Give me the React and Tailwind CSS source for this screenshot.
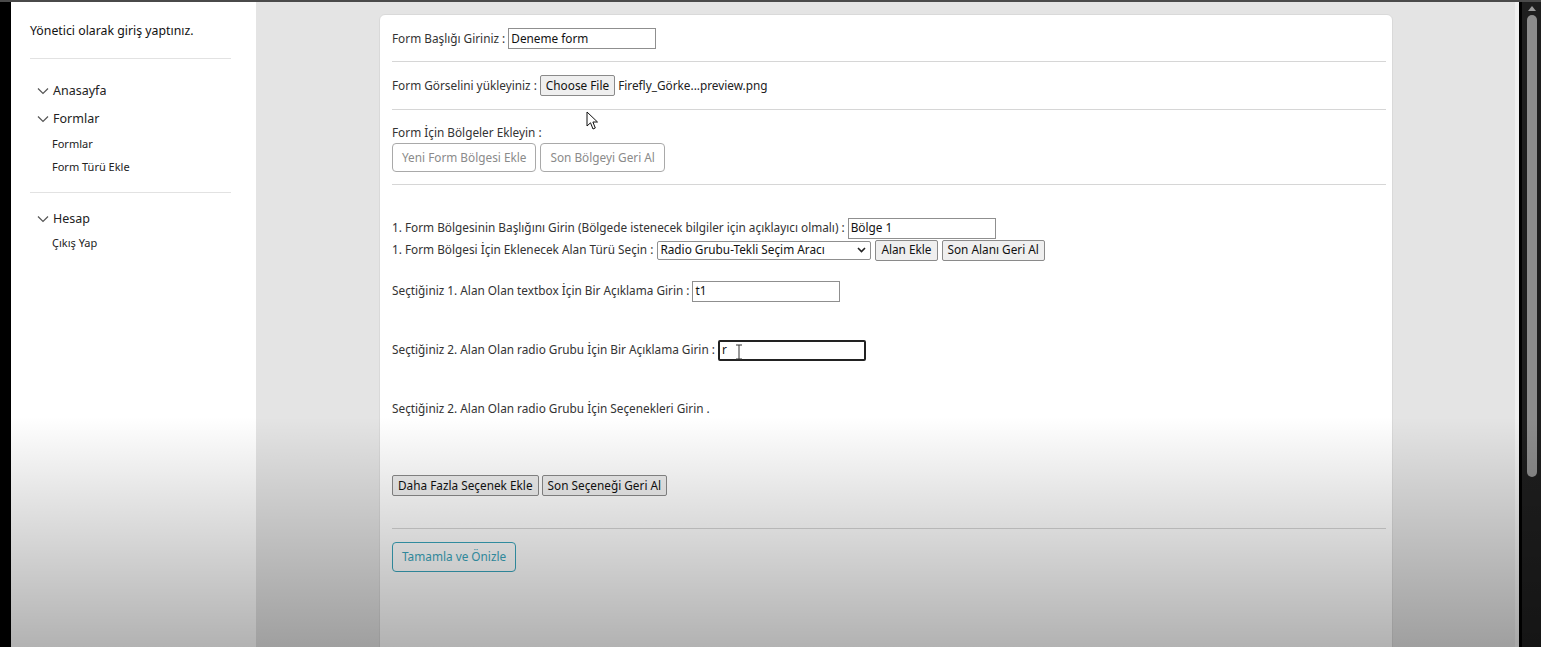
import React from "react";

const font = { fontFamily: '"Noto Sans", "Open Sans", Arial, sans-serif' };

function Chevron() {
  return (
    <svg width="12" height="8" viewBox="0 0 12 8" className="shrink-0">
      <path d="M1 1.5 L6 6.5 L11 1.5" fill="none" stroke="#555" strokeWidth="1.2" />
    </svg>
  );
}

function NavHead({ children }) {
  return (
    <div className="flex items-center gap-[4px] pl-[7px] text-[12.5px] text-[#222]">
      <Chevron />
      <span>{children}</span>
    </div>
  );
}

function TextInput({ value, w = "w-[148px]", focused }) {
  return (
    <div
      className={`${w} h-[21px] flex items-center bg-white px-[2px] text-[11.8px] text-[#111] ${
        focused ? "border-2 border-[#222] rounded-[2px]" : "border border-[#8f8f8f]"
      }`}
    >
      {value}
    </div>
  );
}

function NativeBtn({ children }) {
  return (
    <button className="h-[21px] px-[5px] bg-[#efefef] border border-[#8a8a8a] rounded-[2px] text-[11.8px] text-[#111] leading-none">
      {children}
    </button>
  );
}

function GhostBtn({ children }) {
  return (
    <button className="h-[29px] px-[9px] bg-white border border-[#a9a9a9] rounded-[4px] text-[11.8px] text-[#8a8a8a] leading-none">
      {children}
    </button>
  );
}

function Divider() {
  return <div className="h-px bg-[#d6d6d6]" />;
}

export default function App() {
  return (
    <div className="relative w-[1541px] h-[647px] overflow-hidden bg-[#e4e4e4] text-[#333]" style={font}>
      <div className="h-[2px] bg-[#4a4a4a]" />
      <div className="flex h-[645px]">
        <div className="w-[11px] bg-black shrink-0" />
        {/* Sidebar */}
        <aside className="w-[245px] shrink-0 bg-white pt-[20px]">
          <div className="pl-[19px] pr-[25px]">
            <div className="text-[12.3px] text-[#111] h-[17px] leading-[17px]">Yönetici olarak giriş yaptınız.</div>
            <div className="mt-[19px] h-px bg-[#e2e2e2]" />
            <div className="mt-[23px] flex flex-col">
              <div className="h-[18px] flex items-center"><NavHead>Anasayfa</NavHead></div>
              <div className="mt-[10px] h-[18px] flex items-center"><NavHead>Formlar</NavHead></div>
              <div className="mt-[8px] pl-[22px] text-[11px] text-[#222] h-[16px] leading-[16px]">Formlar</div>
              <div className="mt-[7px] pl-[22px] text-[11px] text-[#222] h-[16px] leading-[16px]">Form Türü Ekle</div>
            </div>
            <div className="mt-[17px] h-px bg-[#e2e2e2]" />
            <div className="mt-[17px] flex flex-col">
              <div className="h-[18px] flex items-center"><NavHead>Hesap</NavHead></div>
              <div className="mt-[7px] pl-[22px] text-[11px] text-[#222] h-[16px] leading-[16px]">Çıkış Yap</div>
            </div>
          </div>
        </aside>

        {/* Main */}
        <main className="flex-1 flex bg-[#e4e4e4]">
          <div className="flex-1 pl-[123px] pt-[12px]">
            <div className="w-[1014px] h-[700px] bg-white border border-[#d9d9d9] rounded-[6px] pl-[12px] pr-[6px] text-[11.8px] text-[#333]">
              <div className="h-[46px] pt-[1px] flex items-center gap-[3px]">
                <span>Form Başlığı Giriniz :</span>
                <TextInput value="Deneme form" />
              </div>
              <Divider />
              <div className="h-[47px] flex items-center gap-[3px]">
                <span>Form Görselini yükleyiniz :</span>
                <NativeBtn>Choose File</NativeBtn>
                <span className="text-[#222]">Firefly_Görke...preview.png</span>
              </div>
              <Divider />
              <div className="pt-[14px] pb-[12px]">
                <div className="h-[16px] leading-[16px]">Form İçin Bölgeler Ekleyin :</div>
                <div className="mt-[3px] flex gap-[4px]">
                  <GhostBtn>Yeni Form Bölgesi Ekle</GhostBtn>
                  <GhostBtn>Son Bölgeyi Geri Al</GhostBtn>
                </div>
              </div>
              <Divider />
              <div className="pt-[32px]">
                <div className="h-[22px] flex items-center gap-[3px]">
                  <span>1. Form Bölgesinin Başlığını Girin (Bölgede istenecek bilgiler için açıklayıcı olmalı) :</span>
                  <TextInput value="Bölge 1" />
                </div>
                <div className="h-[22px] flex items-center gap-[4px]">
                  <span>1. Form Bölgesi İçin Eklenecek Alan Türü Seçin :</span>
                  <div className="w-[214px] h-[19px] border border-[#8f8f8f] rounded-[2px] bg-white flex items-center justify-between pl-[2px] pr-[4px] text-[11.8px] text-[#111]">
                    <span>Radio Grubu-Tekli Seçim Aracı</span>
                    <svg width="9" height="6" viewBox="0 0 9 6"><path d="M1 1 L4.5 4.5 L8 1" fill="none" stroke="#222" strokeWidth="1.6" /></svg>
                  </div>
                  <NativeBtn>Alan Ekle</NativeBtn>
                  <NativeBtn>Son Alanı Geri Al</NativeBtn>
                </div>
                <div className="mt-[19px] h-[22px] flex items-center gap-[3px]">
                  <span>Seçtiğiniz 1. Alan Olan textbox İçin Bir Açıklama Girin :</span>
                  <TextInput value="t1" />
                </div>
                <div className="mt-[37px] h-[22px] flex items-center gap-[3px]">
                  <span>Seçtiğiniz 2. Alan Olan radio Grubu İçin Bir Açıklama Girin :</span>
                  <div className="relative">
                    <TextInput value="r" focused />
                    <svg className="absolute left-[17px] top-[4px]" width="8" height="16" viewBox="0 0 8 16">
                      <path d="M1 1 H7 M4 1 V15 M1 15 H7" fill="none" stroke="#333" strokeWidth="1" />
                    </svg>
                  </div>
                </div>
                <div className="mt-[38px] h-[20px] flex items-center">
                  <span>Seçtiğiniz 2. Alan Olan radio Grubu İçin Seçenekleri Girin .</span>
                </div>
                <div className="mt-[56px] flex gap-[3px]">
                  <NativeBtn>Daha Fazla Seçenek Ekle</NativeBtn>
                  <NativeBtn>Son Seçeneği Geri Al</NativeBtn>
                </div>
              </div>
              <div className="mt-[32px]"><Divider /></div>
              <div className="pt-[13px]">
                <button className="h-[30px] px-[9px] border border-[#3aa6bd] rounded-[4px] text-[11.8px] text-[#3aa6bd] bg-transparent leading-none">
                  Tamamla ve Önizle
                </button>
              </div>
            </div>
          </div>
          <div className="w-[4px] bg-[#f0f0f0]" />
          <div className="w-[3px] bg-black" />
          <div className="w-[19px] bg-[#1e1e1e] flex flex-col items-center pt-[3px]">
            <svg width="10" height="7" viewBox="0 0 10 7"><path d="M1 6 L5 1 L9 6 Z" fill="#9a9a9a" /></svg>
            <div className="mt-[3px] w-[10px] h-[462px] rounded-[5px] bg-[#8c8c8c]" />
          </div>
        </main>
      </div>

      {/* mouse cursor */}
      <svg className="absolute left-[586px] top-[111px] pointer-events-none" width="13" height="20" viewBox="0 0 13 20">
        <path d="M1 1 L1 15 L4.5 11.8 L7 18 L9.3 17 L6.9 11 L11.5 11 Z" fill="white" stroke="#111" strokeWidth="1" strokeLinejoin="round" />
      </svg>

      {/* video darkening overlay */}
      <div className="absolute left-0 right-0 bottom-0 h-[230px] pointer-events-none bg-gradient-to-b from-[rgba(0,0,0,0)] to-[rgba(0,0,0,0.3)]" />
    </div>
  );
}
